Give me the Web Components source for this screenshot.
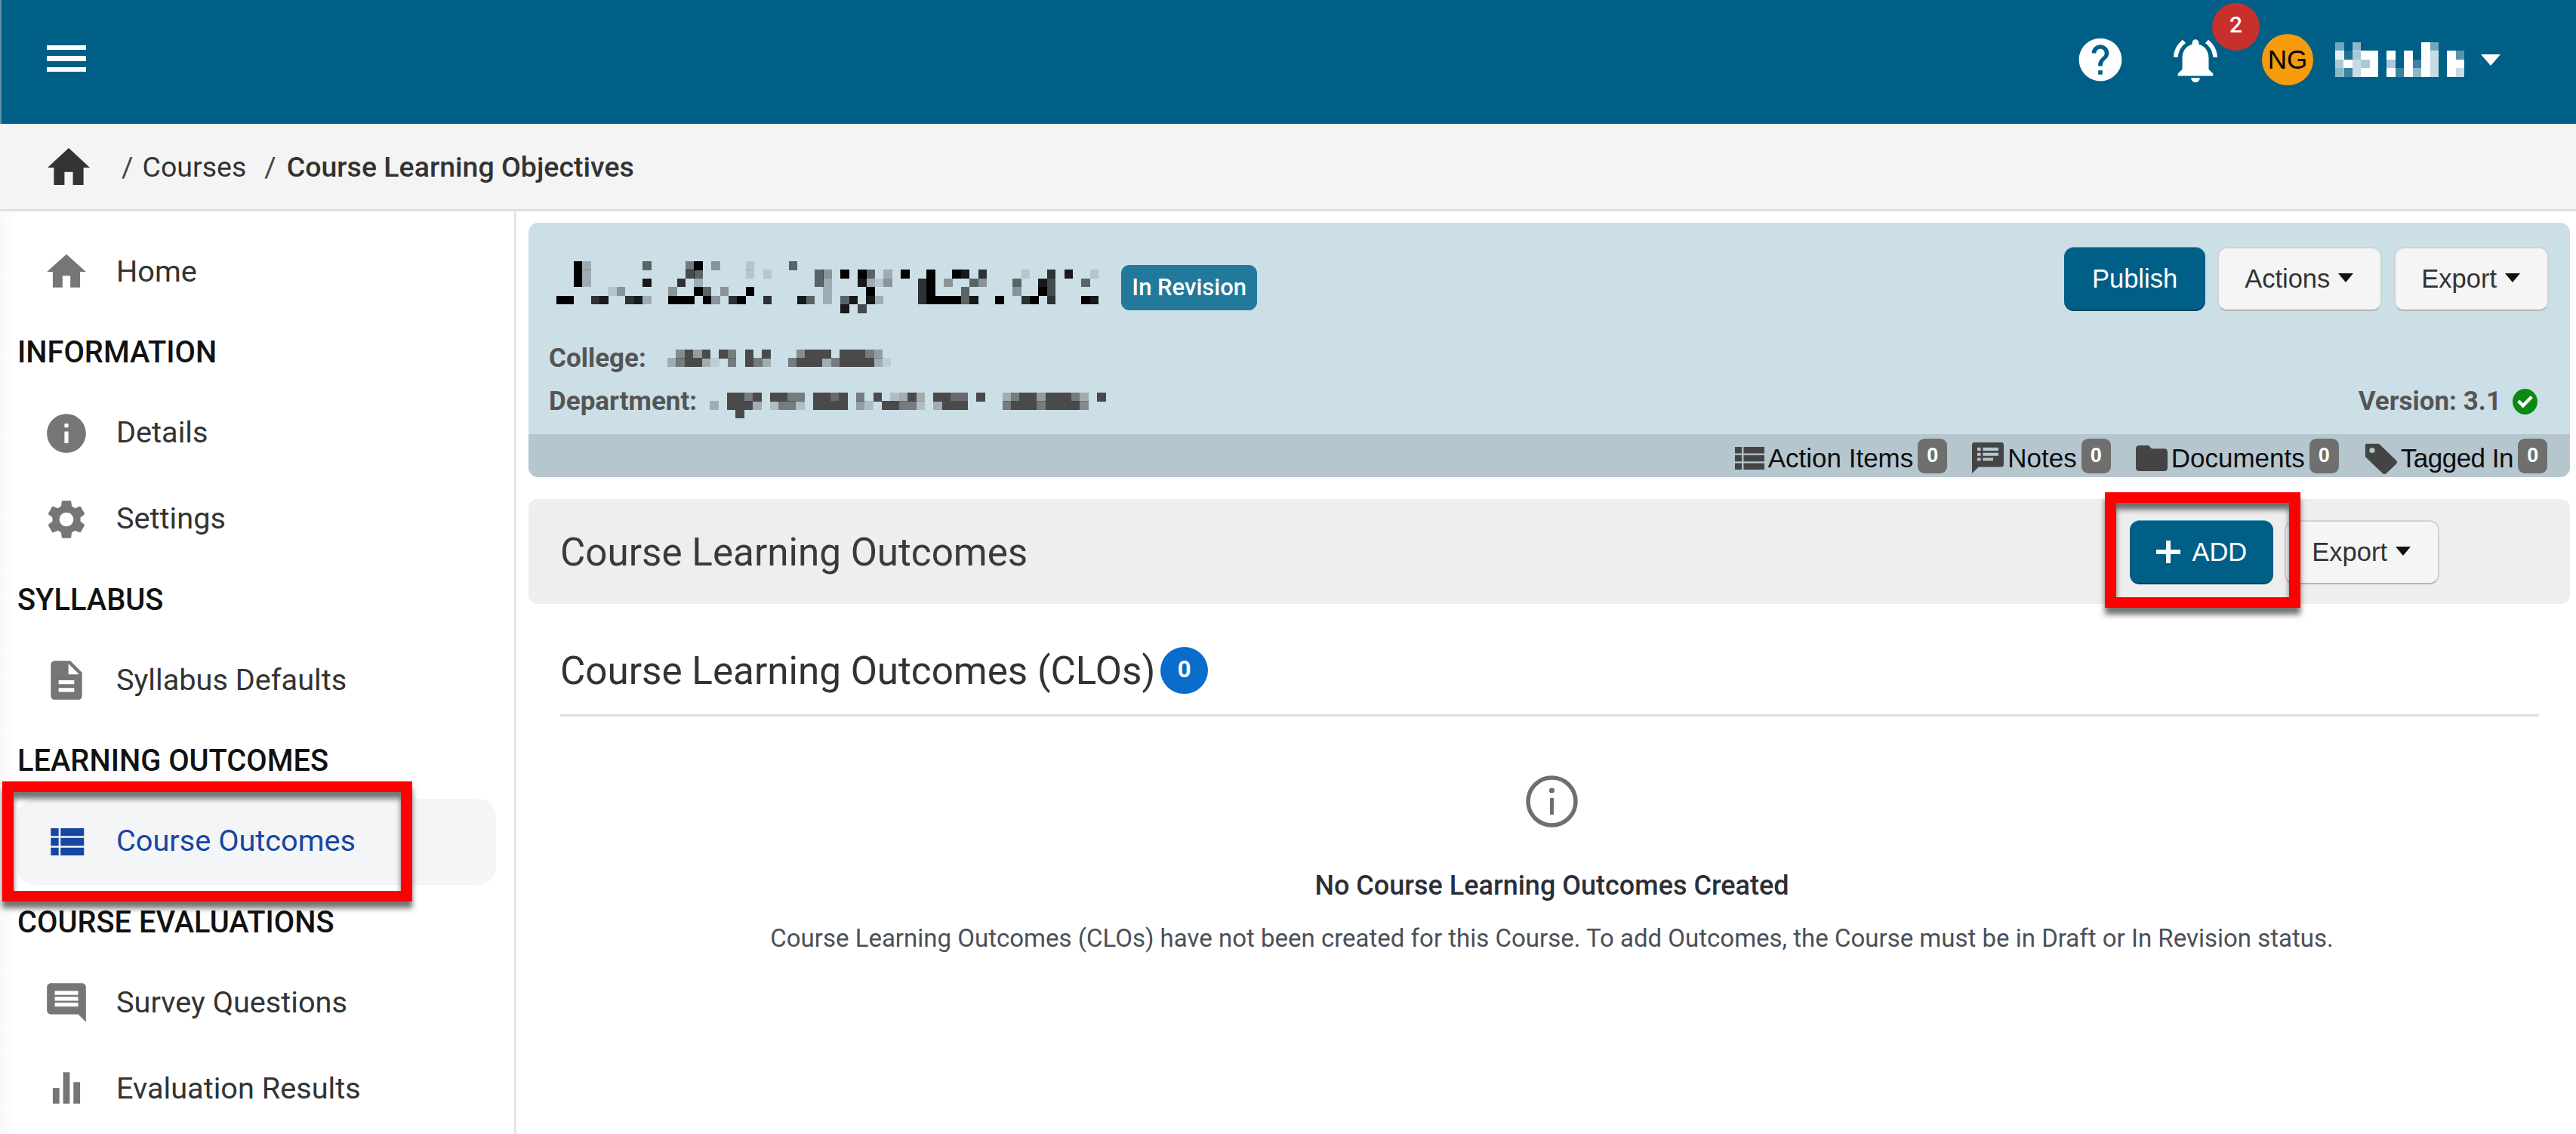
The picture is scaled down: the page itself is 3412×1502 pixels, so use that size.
<!DOCTYPE html>
<html lang="en">
<head>
<meta charset="utf-8">
<title>Course Learning Outcomes</title>
<style>
    html, body { margin: 0; height: 1502px; overflow: hidden; background: #fff; }
    body { font-family: Roboto, "Liberation Sans", sans-serif; color: #333; }
    .page-body { display: flex; height: 1222px; }
    .content { flex: 1; min-width: 0; }
</style>
</head>
<body>
<top-bar></top-bar>
<bread-crumb></bread-crumb>
<div class="page-body">
    <side-nav>
        <nav-item icon="home">Home</nav-item>
        <nav-heading>INFORMATION</nav-heading>
        <nav-item icon="info">Details</nav-item>
        <nav-item icon="settings">Settings</nav-item>
        <nav-heading>SYLLABUS</nav-heading>
        <nav-item icon="file">Syllabus Defaults</nav-item>
        <nav-heading>LEARNING OUTCOMES</nav-heading>
        <nav-item icon="list" active>Course Outcomes</nav-item>
        <nav-heading>COURSE EVALUATIONS</nav-heading>
        <nav-item icon="chat">Survey Questions</nav-item>
        <nav-item icon="bars">Evaluation Results</nav-item>
    </side-nav>
    <main-content class="content">
        <course-header>
            <pixel-blur slot="title" cell="11.4" color="#000" data-rows="2:9 3:2 10:5 15:4 16:9 18:3 22:1 27:5;2:9 3:2 15:6 16:5 22:1 24:1 30:5 31:3 33:9 35:9 36:5 38:2 40:9 43:9 46:9 47:8 49:7 54:1 57:7 59:8 62:1;2:9 3:2 10:8 14:7 16:2 30:5 31:2 35:8 36:2 37:1 38:3 42:7 43:9 45:3 48:5 49:3 53:5 56:8 57:6 61:5;6:1 7:3 13:3 16:9 17:5 19:3 22:9 31:2 36:9 42:7 43:9 47:5 53:3 56:9 57:6;0:9 1:9 4:7 5:8 8:7 9:8 10:2 13:9 14:9 15:9 17:9 18:3 20:7 21:9 24:7 28:8 29:5 31:2 33:5 34:8 36:8 37:2 42:7 43:9 44:9 45:9 46:9 47:5 48:8 51:9 54:7 55:9 57:7 61:9 62:8;33:8 35:6" style="margin-left:10px"></pixel-blur>
            <status-badge slot="title">In Revision</status-badge>
            <tool-button slot="actions" variant="primary" style="--pad:37px">Publish</tool-button>
            <tool-button slot="actions" caret>Actions</tool-button>
            <tool-button slot="actions" caret>Export</tool-button>
            <span slot="college">College:</span>
            <pixel-blur slot="college" cell="11.4" color="#4a4a4a" data-rows="1:5 2:9 3:4 4:9 6:9 7:6 9:9 11:9 15:5 16:9 17:9 18:9 20:9 21:9 22:9 23:6 24:4;0:3 1:6 2:9 3:9 4:3 5:1 7:6 9:9 10:6 11:3 14:6 15:9 16:9 17:9 18:3 19:6 20:9 21:9 22:9 23:9 24:3 25:1" style="margin-left:28px"></pixel-blur>
            <span slot="department">Department:</span>
            <pixel-blur slot="department" cell="11.4" color="#4a4a4a" data-rows="2:9 3:9 4:6 5:9 7:9 8:9 9:6 10:6 12:9 13:9 14:7 15:9 17:6 19:9 21:2 22:3 23:9 24:3 26:9 27:9 28:7 29:7 31:9 34:3 35:6 36:9 37:9 38:4 39:9 40:9 41:9 42:6 43:3 45:9;0:3 2:9 3:9 4:9 5:3 7:2 8:6 9:6 10:2 12:9 13:9 14:9 15:9 17:4 18:2 20:9 21:9 22:6 23:6 24:2 26:3 27:9 28:9 29:9 34:6 35:9 36:9 37:9 38:6 39:9 40:9 41:9 42:9 43:5;3:9" style="margin-left:17px;margin-top:11px"></pixel-blur>
            <span slot="version">Version: 3.1</span>
            <count-link slot="links" icon="list" w="39" h="30" vb="4 5 17 14">Action Items</count-link>
            <count-link slot="links" icon="note" w="42" h="41">Notes</count-link>
            <count-link slot="links" icon="folder" w="42" h="34" vb="2 4 20 16">Documents</count-link>
            <count-link slot="links" icon="tag" w="44" h="42" style="letter-spacing:-.5px">Tagged In</count-link>
        </course-header>
        <section-bar>
            <span slot="title">Course Learning Outcomes</span>
            <tool-button slot="actions" variant="primary" icon="plus" marked>ADD</tool-button>
            <tool-button slot="actions" caret>Export</tool-button>
        </section-bar>
        <clo-list count="0"></clo-list>
    </main-content>
</div>

<script>
const ICONS = {
    home: '<path d="M10 20v-6h4v6h5v-8h3L12 3 2 12h3v8z"/>',
    info: '<path d="M12 2C6.48 2 2 6.48 2 12s4.48 10 10 10 10-4.48 10-10S17.52 2 12 2zm1 15h-2v-6h2v6zm0-8h-2V7h2v2z"/>',
    settings: '<path d="M19.14 12.94c.04-.3.06-.61.06-.94 0-.32-.02-.64-.07-.94l2.03-1.58c.18-.14.23-.41.12-.61l-1.92-3.32c-.12-.22-.37-.29-.59-.22l-2.39.96c-.5-.38-1.03-.7-1.62-.94l-.36-2.54c-.04-.24-.24-.41-.48-.41h-3.84c-.24 0-.43.17-.47.41l-.36 2.54c-.59.24-1.13.57-1.62.94l-2.39-.96c-.22-.08-.47 0-.59.22L2.74 8.87c-.12.21-.08.47.12.61l2.03 1.58c-.05.3-.09.63-.09.94s.02.64.07.94l-2.03 1.58c-.18.14-.23.41-.12.61l1.92 3.32c.12.22.37.29.59.22l2.39-.96c.5.38 1.03.7 1.62.94l.36 2.54c.05.24.24.41.48.41h3.84c.24 0 .44-.17.47-.41l.36-2.54c.59-.24 1.13-.56 1.62-.94l2.39.96c.22.08.47 0 .59-.22l1.92-3.32c.12-.22.07-.47-.12-.61l-2.01-1.58zM12 15.6c-1.98 0-3.6-1.62-3.6-3.6s1.62-3.6 3.6-3.6 3.6 1.62 3.6 3.6-1.62 3.6-3.6 3.6z"/>',
    file: '<path d="M14 2H6c-1.1 0-1.99.9-1.99 2L4 20c0 1.1.89 2 1.99 2H18c1.1 0 2-.9 2-2V8l-6-6zm2 16H8v-2h8v2zm0-4H8v-2h8v2zm-3-5V3.5L18.5 9H13z"/>',
    list: '<path d="M4 14h4v-4H4v4zm0 5h4v-4H4v4zM4 9h4V5H4v4zm5 5h12v-4H9v4zm0 5h12v-4H9v4zM9 5v4h12V5H9z"/>',
    chat: '<path d="M22 4c0-1.1-.9-2-2-2H4c-1.1 0-2 .9-2 2v12c0 1.1.9 2 2 2h14l4 4V4zm-4 10H6v-2h12v2zm0-3H6V9h12v2zm0-3H6V6h12v2z"/>',
    bars: '<path d="M5 11.6h3.4v8H5zM10.3 3.6h3.4v16h-3.4zm5.3 5H19v11h-3.4z"/>',
    help: '<path d="M12 2C6.48 2 2 6.48 2 12s4.48 10 10 10 10-4.48 10-10S17.52 2 12 2zm1 17h-2v-2h2v2zm2.07-7.75l-.9.92C13.45 12.9 13 13.5 13 15h-2v-.5c0-1.1.45-2.1 1.17-2.83l1.24-1.26c.37-.36.59-.86.59-1.41 0-1.1-.9-2-2-2s-2 .9-2 2H8c0-2.21 1.79-4 4-4s4 1.79 4 4c0 .88-.36 1.68-.93 2.25z"/>',
    bell: '<path d="M7.58 4.08L6.15 2.65C3.75 4.48 2.17 7.3 2.03 10.5h2c.15-2.65 1.51-4.97 3.55-6.42zm12.39 6.42h2c-.15-3.2-1.73-6.02-4.12-7.85l-1.42 1.43c2.02 1.45 3.39 3.77 3.54 6.42zM18 11c0-3.07-1.64-5.64-4.5-6.32V4c0-.83-.67-1.5-1.5-1.5s-1.5.67-1.5 1.5v.68C7.63 5.36 6 7.92 6 11v5l-2 2v1h16v-1l-2-2v-5zm-6 11c.14 0 .27-.01.4-.04.65-.14 1.18-.58 1.44-1.18.1-.24.15-.5.15-.78h-4c.01 1.1.9 2 2.01 2z"/>',
    folder: '<path d="M10 4H4c-1.1 0-1.99.9-1.99 2L2 18c0 1.1.9 2 2 2h16c1.1 0 2-.9 2-2V8c0-1.1-.9-2-2-2h-8l-2-2z"/>',
    note: '<path fill-rule="evenodd" d="M2 0h20a2 2 0 0 1 2 2v15a2 2 0 0 1-2 2H5l-5 5V2a2 2 0 0 1 2-2zM4 4v2.4h2.6V4zm4.2 0v2.4H20V4zM4 8v2.4h2.6V8zm4.2 0v2.4H20V8zM4 12v2.2h2.6V12zm4.2 0v2.2H16V12z"/>',
    tag: '<path fill-rule="evenodd" d="M2 1h8c.6 0 1.2.2 1.6.7l11.7 11.7c.9.9.9 2.1 0 3l-6.9 6.9c-.9.9-2.1.9-3 0L1.7 11.6C1.2 11.2 1 10.6 1 10V2a1 1 0 0 1 1-1zM6 4a2 2 0 1 0 0 4 2 2 0 0 0 0-4z"/>',
    plus: '<path d="M13 0h6v12h13v6H19v12h-6V18H0v-6h13z"/>',
    check: '<circle cx="12" cy="12" r="12" fill="#0b8a12"/><path fill="#fff" d="M10 18l-5.5-5.5 2.2-2.2 3.3 3.3 7.3-7.3 2.2 2.2z"/>'
};

class AppIcon extends HTMLElement {
    connectedCallback() {
        const w = this.getAttribute("w") || 24;
        const h = this.getAttribute("h") || w;
        const vb = this.getAttribute("vb") || "0 0 24 24";
        this.attachShadow({ mode: "open" }).innerHTML = `
            <style>
                :host { display: block; flex: none; width: ${w}px; height: ${h}px; }
                svg { display: block; width: 100%; height: 100%; fill: currentColor; }
            </style>
            <svg viewBox="${vb}" preserveAspectRatio="none">${ICONS[this.getAttribute("name")]}</svg>
        `;
    }
}

// mosaic blocks standing in for text that was redacted in the original
class PixelBlur extends HTMLElement {
    connectedCallback() {
        const cell = parseFloat(this.getAttribute("cell"));
        const color = this.getAttribute("color");
        const rows = this.dataset.rows.split(";");
        let cols = 0;
        let rects = "";
        rows.forEach((row, y) => {
            row.split(" ").forEach((pair) => {
                const [x, level] = pair.split(":").map(Number);
                cols = Math.max(cols, x + 1);
                rects += `<rect x="${x}" y="${y}" width="1.02" height="1.02" fill-opacity="${level / 9}"/>`;
            });
        });
        this.attachShadow({ mode: "open" }).innerHTML = `
            <style>
                :host { display: block; flex: none; line-height: 0; }
                svg { display: block; fill: ${color}; }
            </style>
            <svg width="${cols * cell}" height="${rows.length * cell}" viewBox="0 0 ${cols} ${rows.length}" shape-rendering="crispEdges">${rects}</svg>
        `;
    }
}

class RedMark extends HTMLElement {
    constructor() {
        super();
        this.attachShadow({ mode: "open" }).innerHTML = `
            <style>
                :host {
                    position: absolute;
                    box-sizing: border-box;
                    border: solid #fe0000;
                    border-width: 14px 15px;
                    box-shadow: 0 9px 7px rgba(0, 0, 0, .55), inset 0 9px 7px rgba(0, 0, 0, .55);
                    pointer-events: none;
                    z-index: 5;
                }
            </style>
        `;
    }
}

class TopBar extends HTMLElement {
    constructor() {
        super();
        this.attachShadow({ mode: "open" }).innerHTML = `
            <style>
                :host {
                    display: flex;
                    align-items: center;
                    box-sizing: border-box;
                    height: 164px;
                    padding: 0 100px 6px 62px;
                    background: #005f87;
                    box-shadow: inset 2px 0 0 #5d8fa9;
                    color: #fff;
                }
                .menu { display: flex; flex-direction: column; gap: 8px; width: 52px; margin-top: -3px; }
                .menu span { height: 6.5px; background: #fff; }
                .spacer { flex: 1; }
                .bell { position: relative; margin: 2px 53px 0 57px; }
                .count {
                    position: absolute;
                    left: 57px;
                    top: -41px;
                    width: 63px;
                    height: 63px;
                    border-radius: 50%;
                    background: #c8302b;
                    font: 500 30px/58px Roboto, sans-serif;
                    text-align: center;
                }
                .avatar {
                    width: 68px;
                    height: 68px;
                    border-radius: 50%;
                    background: #f59b0c;
                    color: #000;
                    font: 35px/68px "Liberation Sans", sans-serif;
                    text-align: center;
                }
                .caret {
                    width: 0;
                    height: 0;
                    margin-left: 22px;
                    border: solid transparent;
                    border-width: 15px 13.5px 0;
                    border-top-color: #fff;
                }
            </style>
            <div class="menu"><span></span><span></span><span></span></div>
            <div class="spacer"></div>
            <app-icon name="help" w="68"></app-icon>
            <div class="bell">
                <app-icon name="bell" w="70"></app-icon>
                <div class="count">2</div>
            </div>
            <div class="avatar">NG</div>
            <pixel-blur cell="11.4" color="#fff" style="margin-left:29px" data-rows="0:4 2:5 10:9 11:4;0:8 1:1 2:6 3:9 4:9 6:9 8:9 10:9 11:7 13:9 14:3;0:6 1:9 2:7 3:6 4:9 6:6 8:9 9:2 10:9 11:7 13:9 14:9;0:5 1:2 2:7 3:9 4:9 6:9 7:2 8:9 9:5 10:9 11:7 13:9 14:7"></pixel-blur>
            <div class="caret"></div>
        `;
    }
}

class BreadCrumb extends HTMLElement {
    constructor() {
        super();
        this.attachShadow({ mode: "open" }).innerHTML = `
            <style>
                :host {
                    display: flex;
                    align-items: center;
                    box-sizing: border-box;
                    height: 116px;
                    padding-left: 63px;
                    background: #f4f4f4;
                    border-bottom: 3px solid #e0e0e0;
                    color: #333;
                    font-size: 37.5px;
                }
                .sep { margin: 0 14px 0 24px; color: #444; }
                .sep.first { margin: 0 12px 0 42px; }
                strong { font-weight: 500; }
            </style>
            <app-icon name="home" w="56" h="49" vb="2 3 20 17"></app-icon>
            <span class="sep first">/</span>
            <span>Courses</span>
            <span class="sep">/</span>
            <strong>Course Learning Objectives</strong>
        `;
    }
}

class SideNav extends HTMLElement {
    constructor() {
        super();
        this.attachShadow({ mode: "open" }).innerHTML = `
            <style>
                :host {
                    display: block;
                    flex: none;
                    box-sizing: border-box;
                    width: 684px;
                    padding: 23px 24px 0 23px;
                    background: linear-gradient(to right, #f9f9f9, #fff 24px);
                    border-right: 3px solid #e6e6e6;
                }
            </style>
            <slot></slot>
        `;
    }
}

class NavHeading extends HTMLElement {
    constructor() {
        super();
        this.attachShadow({ mode: "open" }).innerHTML = `
            <style>
                :host {
                    display: flex;
                    align-items: center;
                    height: 99.5px;
                    color: #111;
                    font-size: 39.8px;
                    font-weight: 500;
                }
            </style>
            <slot></slot>
        `;
    }
}

class NavItem extends HTMLElement {
    connectedCallback() {
        const active = this.hasAttribute("active");
        this.attachShadow({ mode: "open" }).innerHTML = `
            <style>
                :host {
                    display: flex;
                    align-items: center;
                    position: relative;
                    height: 114px;
                    padding-left: 34px;
                    border-radius: 24px;
                    color: #333;
                    font-size: 39.7px;
                }
                :host([active]) { background: #f3f5f7; color: #1746a0; }
                app-icon { margin-right: 35px; color: #767676; }
                :host([active]) app-icon { color: #1746a0; }
                .label { margin-top: -2px; }
                red-mark { left: -20px; top: -23px; width: 543px; height: 159px; }
            </style>
            <app-icon name="${this.getAttribute("icon")}" w="62"></app-icon>
            <span class="label"><slot></slot></span>
            ${active ? "<red-mark></red-mark>" : ""}
        `;
    }
}

class MainContent extends HTMLElement {
    constructor() {
        super();
        this.attachShadow({ mode: "open" }).innerHTML = `
            <style>
                :host { display: block; padding: 15px 8px 0 16px; }
            </style>
            <slot></slot>
        `;
    }
}

class StatusBadge extends HTMLElement {
    constructor() {
        super();
        this.attachShadow({ mode: "open" }).innerHTML = `
            <style>
                :host {
                    display: flex;
                    align-items: center;
                    justify-content: center;
                    box-sizing: border-box;
                    width: 180px;
                    height: 60px;
                    margin-left: 30px;
                    border-radius: 11px;
                    background: #217a9b;
                    color: #fff;
                    font-size: 31px;
                    font-weight: 500;
                }
            </style>
            <slot></slot>
        `;
    }
}

class ToolButton extends HTMLElement {
    connectedCallback() {
        const icon = this.getAttribute("icon");
        this.attachShadow({ mode: "open" }).innerHTML = `
            <style>
                :host {
                    display: flex;
                    align-items: center;
                    position: relative;
                    box-sizing: border-box;
                    height: 85px;
                    padding: 0 var(--pad, 34px);
                    background: #f5f5f5;
                    border: 2px solid #d2d2d2;
                    border-bottom-color: #b5b5b5;
                    border-radius: 13px;
                    color: #333;
                    font: 34.5px "Liberation Sans", Arial, sans-serif;
                }
                :host([variant="primary"]) {
                    background: #005f87;
                    border: 0;
                    border-top: 1px solid #4ba3c4;
                    border-bottom: 2px solid #00445f;
                    color: #fff;
                }
                :host([icon]) { padding-right: 35px; padding-left: 35px; }
                .caret {
                    width: 0;
                    height: 0;
                    margin: -3px 2px 0 11px;
                    border: solid transparent;
                    border-width: 12px 10.5px 0;
                    border-top-color: #111;
                }
                app-icon { margin-right: 15px; }
                red-mark { left: -33px; top: -38px; width: 259px; height: 153px; }
            </style>
            ${icon ? `<app-icon name="${icon}" w="32" h="30" vb="0 0 32 30"></app-icon>` : ""}
            <slot></slot>
            ${this.hasAttribute("caret") ? '<span class="caret"></span>' : ""}
            ${this.hasAttribute("marked") ? "<red-mark></red-mark>" : ""}
        `;
    }
}

class CountLink extends HTMLElement {
    connectedCallback() {
        const vb = this.getAttribute("vb");
        this.attachShadow({ mode: "open" }).innerHTML = `
            <style>
                :host {
                    display: flex;
                    align-items: center;
                    padding-top: 6px;
                    color: #0d0d0d;
                    font: 35px "Liberation Sans", Arial, sans-serif;
                }
                app-icon { margin-right: 5px; color: #444; }
                .chip {
                    box-sizing: border-box;
                    width: 39px;
                    height: 46px;
                    margin: -6px 0 0 6px;
                    border-radius: 9px;
                    background: #6f6f6f;
                    color: #fff;
                    font: 700 27px/44px "Liberation Sans", Arial, sans-serif;
                    text-align: center;
                }
            </style>
            <app-icon name="${this.getAttribute("icon")}" w="${this.getAttribute("w")}" h="${this.getAttribute("h")}" ${vb ? `vb="${vb}"` : ""}></app-icon>
            <slot></slot>
            <span class="chip">0</span>
        `;
    }
}

class CourseHeader extends HTMLElement {
    constructor() {
        super();
        this.attachShadow({ mode: "open" }).innerHTML = `
            <style>
                :host {
                    display: block;
                    overflow: hidden;
                    height: 337px;
                    border-radius: 13px;
                    background: #ccdfe7;
                }
                .top { box-sizing: border-box; height: 280px; padding: 32px 28px 0 27px; }
                .row { display: flex; align-items: center; justify-content: space-between; }
                .title-row { height: 85px; }
                .group { display: flex; align-items: center; }
                .title { margin-top: 22px; }
                .actions { gap: 16px; }
                .meta-row { height: 57px; color: #555; font-size: 35px; font-weight: 700; }
                .meta-row.first { margin-top: 34px; }
                .version { gap: 15px; margin-right: 15px; }
                .links {
                    display: flex;
                    align-items: center;
                    justify-content: flex-end;
                    gap: 33px;
                    height: 57px;
                    padding-right: 30px;
                    background: #b6c6cf;
                }
            </style>
            <div class="top">
                <div class="row title-row">
                    <div class="group title"><slot name="title"></slot></div>
                    <div class="group actions"><slot name="actions"></slot></div>
                </div>
                <div class="row meta-row first">
                    <div class="group"><slot name="college"></slot></div>
                </div>
                <div class="row meta-row">
                    <div class="group"><slot name="department"></slot></div>
                    <div class="group version"><slot name="version"></slot><app-icon name="check" w="33" h="34"></app-icon></div>
                </div>
            </div>
            <div class="links"><slot name="links"></slot></div>
        `;
    }
}

class SectionBar extends HTMLElement {
    constructor() {
        super();
        this.attachShadow({ mode: "open" }).innerHTML = `
            <style>
                :host {
                    display: flex;
                    align-items: center;
                    justify-content: space-between;
                    box-sizing: border-box;
                    height: 139px;
                    margin-top: 29px;
                    padding: 2px 173px 0 42px;
                    border-radius: 12px;
                    background: #eee;
                    color: #3a3a3a;
                    font-size: 51.2px;
                }
                .actions { display: flex; gap: 15px; }
            </style>
            <slot name="title"></slot>
            <div class="actions"><slot name="actions"></slot></div>
        `;
    }
}

class CloList extends HTMLElement {
    constructor() {
        super();
        this.attachShadow({ mode: "open" }).innerHTML = `
            <style>
                :host { display: block; padding: 57px 41px 0 42px; color: #333; }
                h2 {
                    display: flex;
                    align-items: center;
                    gap: 7px;
                    margin: 0;
                    padding-bottom: 27px;
                    border-bottom: 3px solid #e0e0e0;
                    font-size: 51.2px;
                    font-weight: 400;
                }
                .total {
                    width: 63px;
                    height: 62px;
                    border-radius: 50%;
                    background: #0a6ccb;
                    color: #fff;
                    font: 700 31px/60px Roboto, sans-serif;
                    text-align: center;
                }
                .empty { display: flex; flex-direction: column; align-items: center; padding: 78px 0 0 6px; }
                svg { display: block; width: 69px; height: 69px; }
                h3 { margin: 52px 0 0; color: #2b2f36; font-size: 36px; line-height: 50px; font-weight: 500; }
                p { margin: 20px 0 0; color: #4a5058; font-size: 33px; line-height: 50px; }
            </style>
            <h2>Course Learning Outcomes (CLOs)<span class="total">0</span></h2>
            <div class="empty">
                <svg viewBox="0 0 69 69">
                    <circle cx="34.5" cy="34.5" r="31.5" fill="none" stroke="#6f6f6f" stroke-width="5.5"/>
                    <rect x="32" y="30" width="5" height="22" fill="#6f6f6f"/>
                    <circle cx="34.5" cy="20" r="3.6" fill="#6f6f6f"/>
                </svg>
                <h3>No Course Learning Outcomes Created</h3>
                <p>Course Learning Outcomes (CLOs) have not been created for this Course. To add Outcomes, the Course must be in Draft or In Revision status.</p>
            </div>
        `;
    }
}

customElements.define("app-icon", AppIcon);
customElements.define("pixel-blur", PixelBlur);
customElements.define("red-mark", RedMark);
customElements.define("top-bar", TopBar);
customElements.define("bread-crumb", BreadCrumb);
customElements.define("side-nav", SideNav);
customElements.define("nav-heading", NavHeading);
customElements.define("nav-item", NavItem);
customElements.define("main-content", MainContent);
customElements.define("status-badge", StatusBadge);
customElements.define("tool-button", ToolButton);
customElements.define("count-link", CountLink);
customElements.define("course-header", CourseHeader);
customElements.define("section-bar", SectionBar);
customElements.define("clo-list", CloList);
</script>
</body>
</html>
